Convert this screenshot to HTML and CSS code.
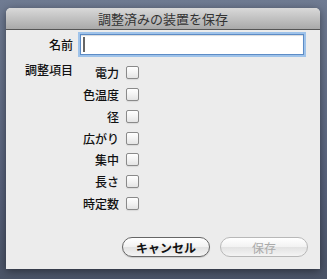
FILE: index.html
```html
<!DOCTYPE html>
<html lang="ja">
<head>
    <meta charset="UTF-8">
    <title>調整済みの装置を保存</title>
    <link rel="stylesheet" href="styles.css">
</head>
<body>
    <div class="window">
        <div class="titlebar">調整済みの装置を保存</div>
        <div class="content">
            <div class="name-row">
                <label class="label" for="name">名前</label>
                <div class="field"><span class="caret"></span></div>
            </div>
            <div class="items-row">
                <div class="label items-label">調整項目</div>
                <div class="items">
                    <div class="item"><span>電力</span><input type="checkbox"></div>
                    <div class="item"><span>色温度</span><input type="checkbox"></div>
                    <div class="item"><span>径</span><input type="checkbox"></div>
                    <div class="item"><span>広がり</span><input type="checkbox"></div>
                    <div class="item"><span>集中</span><input type="checkbox"></div>
                    <div class="item"><span>長さ</span><input type="checkbox"></div>
                    <div class="item"><span>時定数</span><input type="checkbox"></div>
                </div>
            </div>
            <div class="buttons">
                <button class="btn">キャンセル</button>
                <button class="btn disabled">保存</button>
            </div>
        </div>
    </div>
</body>
</html>
```

FILE: styles.css
```css
html, body {
    margin: 0;
    height: 100%;
}
body {
    background: linear-gradient(#6f7b92, #56607a 70%, #4b5467);
    font-family: "Noto Sans CJK JP", "Noto Sans", sans-serif;
    font-size: 12px;
    color: #111;
    overflow: hidden;
}
.window {
    width: 314px;
    height: 261px;
    margin: 8px 0 0 6px;
    background: #ececec;
    border-radius: 5px 5px 0 0;
    box-shadow: 0 2px 8px rgba(0, 0, 0, 0.45);
    display: flex;
    flex-direction: column;
}
.titlebar {
    height: 21px;
    line-height: 21px;
    text-align: center;
    font-size: 13px;
    color: #333;
    background: linear-gradient(#d9d9d9, #a9a9a9);
    border-radius: 5px 5px 0 0;
    border-bottom: 1px solid #555;
}
.content {
    flex: 1;
    display: flex;
    flex-direction: column;
    padding: 4px 0 12px 0;
}
.name-row {
    display: flex;
    align-items: center;
}
.label {
    width: 67px;
    text-align: right;
    font-weight: 500;
}
.field {
    width: 222px;
    height: 19px;
    margin-left: 7px;
    background: #fff;
    border: 1px solid #5d8cc6;
    box-shadow: 0 0 0 2px #9fc3ea, inset 0 1px 1px rgba(0, 0, 0, 0.15);
    display: flex;
    align-items: center;
}
.caret {
    width: 2px;
    height: 15px;
    margin-left: 2px;
    background: #666;
}
.items-row {
    display: flex;
    margin-top: 7px;
}
.items-label {
    line-height: 16px;
}
.items {
    display: flex;
    flex-direction: column;
}
.item {
    display: flex;
    align-items: center;
    height: 21.75px;
}
.item span {
    width: 46px;
    text-align: right;
    font-weight: 500;
}
.item input {
    appearance: none;
    -webkit-appearance: none;
    width: 13px;
    height: 13px;
    margin: 0 0 0 7px;
    border: 1px solid #8a8a8a;
    border-radius: 2px;
    background: linear-gradient(#fff, #f3f3f3 50%, #e4e4e4);
    box-shadow: 0 1px 1px rgba(0, 0, 0, 0.08);
}
.buttons {
    margin-top: auto;
    display: flex;
    justify-content: flex-end;
    gap: 10px;
    padding-right: 12px;
}
.btn {
    width: 88px;
    height: 20px;
    padding: 0;
    font: inherit;
    font-weight: 700;
    color: #111;
    border: 1px solid #666;
    border-radius: 10px;
    background: linear-gradient(#fff, #f2f2f2 50%, #e2e2e2 51%, #f4f4f4);
    box-shadow: 0 1px 1px rgba(0, 0, 0, 0.15);
}
.btn.disabled {
    color: #aaa;
    font-weight: 400;
    border-color: #b8b8b8;
    box-shadow: none;
}
```
